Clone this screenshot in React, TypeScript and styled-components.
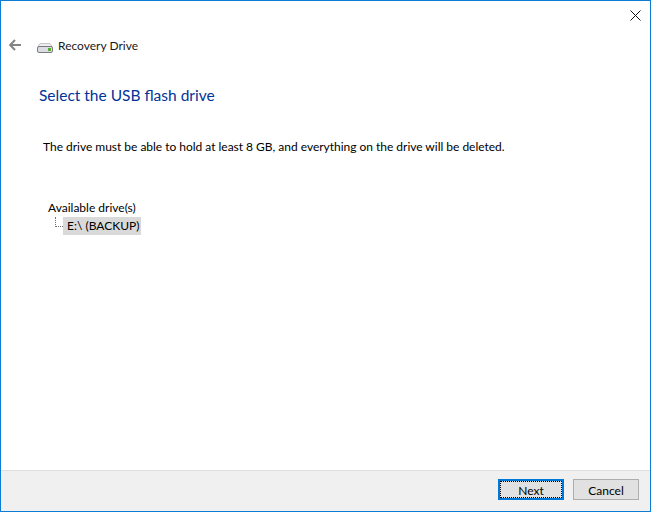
import React from "react";
import styled, { createGlobalStyle } from "styled-components";

const GlobalStyle = createGlobalStyle`
  html, body {
    margin: 0;
    padding: 0;
    background: #ffffff;
  }
`;

const Win = styled.div`
  box-sizing: border-box;
  width: 651px;
  height: 512px;
  display: flex;
  flex-direction: column;
  border: 1px solid #0c7cd5;
  background: #ffffff;
  color: #000000;
  font-family: "Lato", "Noto Sans", sans-serif;
  font-size: 12px;
`;

const TitleBar = styled.div`
  height: 29px;
  display: flex;
  justify-content: flex-end;
`;

const CloseButton = styled.div`
  width: 30px;
  height: 29px;
  display: flex;
  align-items: center;
  justify-content: center;
`;

const NavRow = styled.div`
  height: 30px;
  display: flex;
  align-items: center;
  padding-left: 8px;
`;

const BackArrow = styled.svg`
  width: 12px;
  height: 12px;
  margin-right: 16px;
`;

const DriveIcon = styled.svg`
  width: 16px;
  height: 10px;
  margin-right: 5px;
  margin-top: 6px;
`;

const NavTitle = styled.span`
  color: #1a1a1a;
`;

const Body = styled.div`
  flex: 1;
  padding: 24px 0 0 38px;
`;

const Heading = styled.h1`
  margin: 0;
  font-size: 15.5px;
  line-height: 22px;
  font-weight: 400;
  color: #003399;
`;

const Description = styled.p`
  margin: 33px 0 0 4px;
  line-height: 16px;
  letter-spacing: -0.02px;
`;

const TreeView = styled.div`
  margin: 45px 0 0 9px;
  display: flex;
  flex-direction: column;
`;

const TreeRoot = styled.div`
  line-height: 16px;
`;

const TreeItem = styled.div`
  display: flex;
  align-items: flex-start;
  margin: 1px 0 0 7px;
`;

const TreeConnector = styled.div`
  box-sizing: border-box;
  width: 8px;
  height: 10px;
  border-left: 1px dotted #707070;
  border-bottom: 1px dotted #707070;
`;

const TreeLabel = styled.div<{ $selected?: boolean }>`
  padding: 0 2px 0 4px;
  line-height: 18px;
  background: ${(p) => (p.$selected ? "#d9d9d9" : "transparent")};
`;

const Footer = styled.div`
  box-sizing: border-box;
  height: 41px;
  display: flex;
  justify-content: flex-end;
  align-items: flex-start;
  gap: 9px;
  padding: 8px 11px 0 0;
  background: #f0f0f0;
  border-top: 1px solid #dfdfdf;
`;

const DialogButton = styled.div<{ $primary?: boolean }>`
  box-sizing: border-box;
  width: 66px;
  height: 21px;
  display: flex;
  align-items: center;
  justify-content: center;
  padding-top: 1px;
  background: #e1e1e1;
  border: ${(p) => (p.$primary ? "2px solid #0078d7" : "1px solid #adadad")};
  outline: ${(p) => (p.$primary ? "1px dotted #000000" : "none")};
  outline-offset: ${(p) => (p.$primary ? "-3px" : "0")};
`;

export default function App() {
  return (
    <Win>
      <GlobalStyle />
      <TitleBar>
        <CloseButton>
          <svg width="11" height="11" viewBox="0 0 11 11">
            <path d="M0.5 0.5 L10.5 10.5 M10.5 0.5 L0.5 10.5" stroke="#111111" strokeWidth="1" fill="none" />
          </svg>
        </CloseButton>
      </TitleBar>
      <NavRow>
        <BackArrow viewBox="0 0 12 12">
          <path d="M6 1 L1.2 6 L6 11 M1.2 6 H12" stroke="#848484" strokeWidth="2" fill="none" />
        </BackArrow>
        <DriveIcon viewBox="0 0 16 10">
          <path d="M3 0.5 H13 L15 3.5 H1 Z" fill="#eeeeee" stroke="#c6c6c6" />
          <rect x="0.5" y="3.5" width="15" height="6" rx="1.5" fill="#dcdce6" stroke="#7c7c7c" />
          <rect x="11" y="5" width="3" height="3" fill="#55b030" />
        </DriveIcon>
        <NavTitle>Recovery Drive</NavTitle>
      </NavRow>
      <Body>
        <Heading>Select the USB flash drive</Heading>
        <Description>
          The drive must be able to hold at least 8 GB, and everything on the drive will be deleted.
        </Description>
        <TreeView>
          <TreeRoot>Available drive(s)</TreeRoot>
          <TreeItem>
            <TreeConnector />
            <TreeLabel $selected>E:\ (BACKUP)</TreeLabel>
          </TreeItem>
        </TreeView>
      </Body>
      <Footer>
        <DialogButton $primary>Next</DialogButton>
        <DialogButton>Cancel</DialogButton>
      </Footer>
    </Win>
  );
}
